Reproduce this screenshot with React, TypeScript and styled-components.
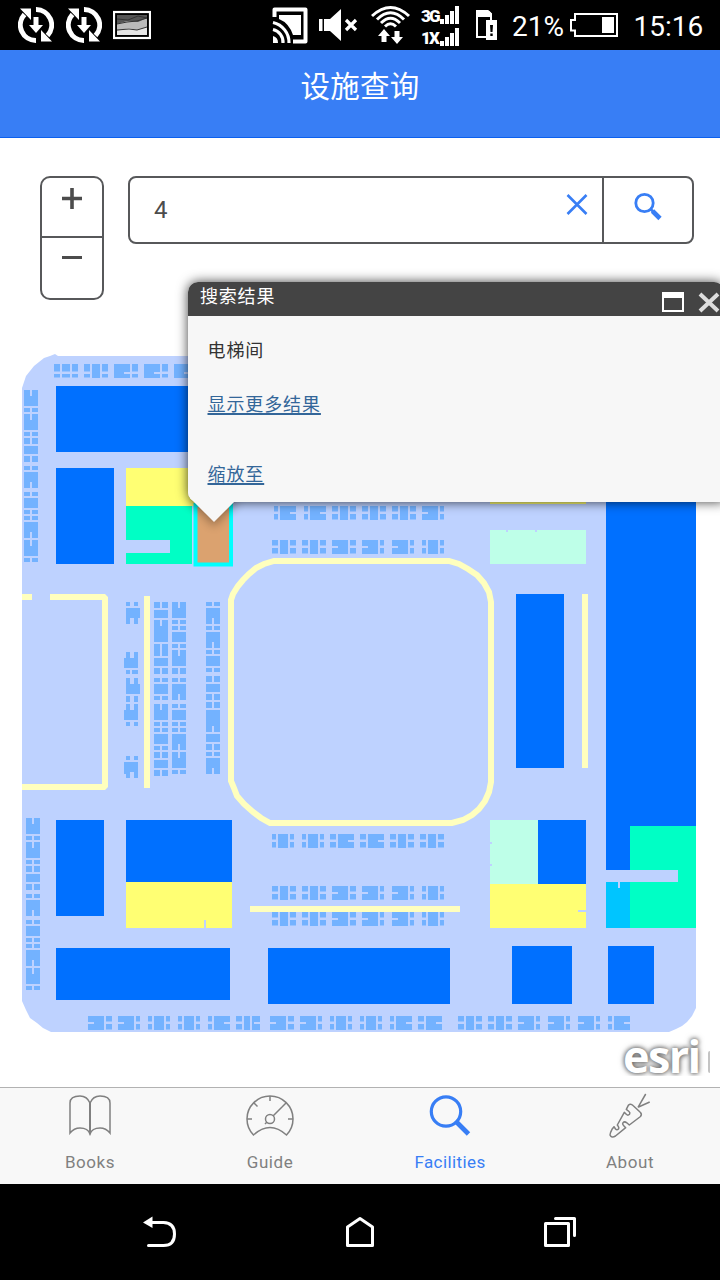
import React from "react";
import styled, { createGlobalStyle } from "styled-components";

const GlobalStyle = createGlobalStyle`
  * { box-sizing: border-box; }
  html, body { margin: 0; padding: 0; background: #fff; overflow: hidden; }
  body { font-family: Roboto, "Noto Sans CJK SC", sans-serif; }
`;

const Screen = styled.div`
  width: 720px;
  height: 1280px;
  display: flex;
  flex-direction: column;
  overflow: hidden;
  background: #fff;
`;

/* ---------- status bar ---------- */

const StatusBar = styled.div`
  height: 50px;
  flex: none;
  display: flex;
  align-items: center;
  background: #000;
  color: #fff;
`;

const StatusIcon = styled.svg<{ $gap?: number }>`
  display: block;
  flex: none;
  height: 50px;
  margin-left: ${(p) => p.$gap ?? 0}px;
`;

const StatusText = styled.span<{ $gap?: number }>`
  font: 400 28px/50px Roboto, sans-serif;
  margin-left: ${(p) => p.$gap ?? 0}px;
  padding-top: 3px;
  white-space: nowrap;
`;

const Radios = styled.div`
  display: flex;
  flex-direction: column;
  gap: 4px;
  margin-left: 10px;
  padding-top: 1px;
`;

const Radio = styled.div`
  display: flex;
  align-items: flex-end;
  width: 39px;
  height: 18px;
  gap: 1px;
  font: 900 17px/16px Roboto, sans-serif;
  letter-spacing: -1.8px;
`;

const RadioName = styled.span`
  width: 18px;
`;

const RadioBar = styled.i<{ $h: number }>`
  width: 4px;
  height: ${(p) => p.$h}px;
  background: #fff;
`;

function SyncIcon({ gap }: { gap: number }) {
  return (
    <StatusIcon $gap={gap} width="36" viewBox="0 0 36 50">
      <g fill="none" stroke="#fff" strokeWidth="5">
        <path d="M18 40.400A15.400 15.400 0 0 1 6.500 14.500" />
        <path d="M18 9.600A15.400 15.400 0 0 1 29.500 35.500" />
      </g>
      <path d="M2 8.500H13V20ZM34 41.500H23V30ZM15.500 17H20.500V25H25L18 33L11 25H15.500Z" fill="#fff" />
    </StatusIcon>
  );
}

function Status() {
  return (
    <StatusBar>
      <SyncIcon gap={18} />
      <SyncIcon gap={12} />
      <StatusIcon $gap={11} width="38" viewBox="0 0 38 50">
        <rect x="1" y="12" width="36" height="26" fill="#000" stroke="#fff" strokeWidth="2.200" />
        <rect x="4" y="15" width="30" height="20" fill="#bbb" />
        <path d="M4 15H34V18L25 22L14 21L4 24Z" fill="#555" />
        <path d="M4 31L16 28L24 30L34 27V35H4Z" fill="#e6e6e6" />
        <path d="M4 19L15 20L25 16L34 18M4 24L14 22L24 21L34 18M4 30L16 29L24 30L34 27" fill="none" stroke="#333" />
      </StatusIcon>
      <StatusIcon $gap={121} width="36" viewBox="0 0 36 50">
        <path d="M2.500 17V9.500H33.500V41.500H21" fill="none" stroke="#fff" strokeWidth="4" strokeLinejoin="round" />
        <path d="M7 15H29V35H21Q17 23 7 19Z" fill="#fff" />
        <path d="M1 22.500A20.500 20.500 0 0 1 17 43M1 29.500A13 13 0 0 1 11 43" fill="none" stroke="#fff" strokeWidth="3.200" />
        <path d="M1 36A7 7 0 0 1 6 43H1Z" fill="#fff" />
      </StatusIcon>
      <StatusIcon $gap={11} width="39" viewBox="0 0 39 50">
        <path d="M0 19H3.500V31H0ZM5 19H11L22 9V41L11 31H5Z" fill="#fff" />
        <path d="M27 20L37 30M37 20L27 30" stroke="#fff" strokeWidth="3.200" />
      </StatusIcon>
      <StatusIcon $gap={13} width="40" viewBox="0 0 40 50">
        <g fill="none" stroke="#fff" strokeWidth="3">
          <path d="M1 16Q19.500-1 38 16" />
          <path d="M6 19.500Q19.500 6 33 19.500" />
          <path d="M10 23Q19.500 13.500 29 23" />
          <path d="M14 26.500Q19.500 21 25 26.500" />
        </g>
        <path d="M13 29L19 36H15.500V42H10.500V36H7ZM26 44L20 37H23.500V31H28.500V37H32Z" fill="#fff" />
      </StatusIcon>
      <Radios>
        {["3G", "1X"].map((name) => (
          <Radio key={name}>
            <RadioName>{name}</RadioName>
            {[5, 9, 13, 18].map((h) => (
              <RadioBar key={h} $h={h} />
            ))}
          </Radio>
        ))}
      </Radios>
      <StatusIcon $gap={15} width="23" viewBox="0 0 23 50">
        <path d="M2 11V37H12M16 20V14L13 11" fill="none" stroke="#fff" strokeWidth="2" />
        <path d="M1 10H13L17 14V17H1ZM11 20H22V40H11Z" fill="#fff" />
        <path d="M15 25H18L17.500 32H15.500ZM15.300 33.500H17.700V36H15.300Z" fill="#000" />
      </StatusIcon>
      <StatusText $gap={14}>21%</StatusText>
      <StatusIcon $gap={6} width="49" viewBox="0 0 49 50">
        <path d="M5 14H47V36H5V30.500H1V20H5Z" fill="none" stroke="#fff" strokeWidth="2" />
        <rect x="32" y="17" width="12" height="16" fill="#fff" />
      </StatusIcon>
      <StatusText $gap={14.5}>15:16</StatusText>
    </StatusBar>
  );
}

const Header = styled.header`
  height: 88px;
  flex: none;
  background: #387ef5;
  border-bottom: 1px solid #0c60ee;
  color: #fff;
  text-align: center;
  font: 400 29.500px/68px "Noto Sans CJK SC", sans-serif;
  letter-spacing: 0.3px;
`;

/* ---------- floor plan ---------- */

const MapStage = styled.main`
  position: relative;
  height: 949px;
  flex: none;
  overflow: hidden;
  background: #fff;
`;

const Plan = styled.svg`
  display: block;
`;

type StripProps = { at: number; runs: string; vertical?: boolean; split?: number };

/* A strip of 14px wide shelving; runs are "start-end" plus p (pair), s (solid), u / n (slot at start / end). */
function Strip({ at, runs, vertical, split = 6 }: StripProps) {
  const parts: number[][] = [];
  runs.split(" ").forEach((run) => {
    const kind = run.slice(-1);
    const [a, b] = run.slice(0, -1).split("-").map(Number);
    const end = split + 2;
    if (kind === "s") {
      parts.push([a, 0, b - a, 14]);
      return;
    }
    if (kind === "p" && !vertical) {
      parts.push([a, 0, b - a, split - 0.5], [a, end, b - a, 13.5 - end]);
      return;
    }
    parts.push([a, 0, b - a, split], [a, end, b - a, 14 - end]);
    if (kind === "u") parts.push([a + 6, split, b - a - 6, 2]);
    if (kind === "n") parts.push([a, split, b - a - 6, 2]);
  });
  const d = parts
    .map(([x, y, w, h]) => (vertical ? `M${at + y} ${x}h${h}v${w}h${-h}z` : `M${x} ${at + y}h${w}v${h}h${-w}z`))
    .join("");
  return <path d={d} fill="#73b2ff" />;
}

const SHELF_ROW =
  "272-278p 280-288s 290-296p 302-308p 310-318s 320-326p 332-348u 350-356p 362-378u 380-384p 392-408u 410-414p 422-426p 428-438s 440-444p";

function FloorPlan() {
  return (
    <Plan width="720" height="949" viewBox="0 138 720 949">
      <path
        d="M22 388L24 382L26 376L30 371L34 366L39 362L44 358L50 356L55 354L58 356H680Q696 366 696 388V1008L692 1016L687 1022L682 1026L676 1029L669 1032H51L43 1028L37 1023L30 1018L26 1010L22 1001Z"
        fill="#bed2ff"
      />
      <Strip at={364} split={8} runs="54-60p 62-70p 72-78p 84-90p 92-100s 102-108p 114-130n 132-138p 144-160n 162-168p 174-190n" />
      <Strip at={506} runs="274-278p 280-296n 304-308p 310-326n 332-338p 340-348s 350-356p 362-368p 370-378s 380-386p 392-398p 400-408s 410-416p 422-438u 440-444p" />
      <Strip at={540} runs={SHELF_ROW} />
      <Strip at={834} runs="272-276p 278-288s 290-294p 302-306p 308-318s 320-324p 330-336p 338-354n 360-366p 368-384n 390-396p 398-406s 408-414p 420-426p 428-436s 438-444p" />
      <Strip at={886} runs={SHELF_ROW} />
      <Strip at={912} runs={SHELF_ROW} />
      <Strip at={1016} runs="88-104u 106-112p 118-134u 136-140p 148-152p 154-164s 166-170p 178-182p 184-194s 196-200p 208-212p 214-230n 236-242p 244-250s 252-260n 270-286u 288-294p 300-316u 318-322p 330-334p 336-346s 348-352p 360-364p 366-376s 378-382p 390-394p 396-412n 418-424p 426-442n 458-464p 466-474s 476-482p 488-494p 496-504s 506-512p 518-534u 536-540p 548-564u 566-570p 578-594u 596-600p 608-612p 614-630n" />
      <Strip vertical at={24} runs="390-406u 408-412p 414-430u 432-436p 438-444p 446-454s 456-462p 466-470p 472-488n 492-496p 498-508s 510-514p 516-520p 522-538n 540-556u 558-562p" />
      <Strip vertical at={26} runs="818-834u 836-840p 842-858u 860-864p 866-872p 874-882s 884-890p 894-898p 900-916n 920-924p 926-936s 938-942p 944-948p 950-966n 968-984u 986-990p" />
      <path
        d="M126 602h4v4h-4zM134 602h4v4h-4zM126 608h14v10h-2v6h-4v-6h-4v6h-4zM126 652h4v6h4v-6h4v16h-14v-10h2zM126 670h4v4h-4zM132 670h6v4h-6zM126 678h4v6h4v-6h4v6h2v10h-14zM126 696h4v6h-4zM134 696h4v6h-4zM126 704h4v6h4v-6h4v16h-14v-10h2zM126 722h4v4h-4zM134 722h4v4h-4zM126 756h4v4h-4zM134 756h4v4h-4zM124 762h14v16h-4v-6h-4v6h-4v-4h-2z"
        fill="#73b2ff"
      />
      <Strip vertical at={154} runs="602-608p 610-618s 620-642u 644-656p 658-666s 668-674p 678-682p 684-694s 696-700p 704-720u 722-726p 728-732p 734-744s 746-750p 752-758p 760-768s 770-776p" />
      <Strip vertical at={172} runs="602-618u 620-624p 626-630p 632-642s 644-648p 650-666u 668-674p 678-682p 684-700n 704-708p 710-720s 722-726p 728-732p 734-750n 752-768u 770-774p" />
      <Strip vertical at={206} runs="602-606p 608-624n 626-630p 632-648n 650-654p 656-666s 668-672p 676-682p 684-692s 694-700p 702-708p 710-732n 734-742s 744-750p 752-756p 758-774n" />
      <path
        d="M56 386H240V452H56ZM56 468H114V564H56ZM56 820H104V916H56ZM126 820H232V882H126ZM56 948H230V1000H56ZM268 948H450V1004H268ZM512 946H572V1004H512ZM608 946H654V1004H608ZM516 594H564V768H516ZM538 820H586V884H538ZM606 480H696V826H630V870H606Z"
        fill="#0070ff"
      />
      <path
        d="M126 468H232V506H126ZM126 882H232V928H206V920H204V928H126ZM490 468H586V504H490ZM490 884H586V910H578V912H586V928H490Z"
        fill="#ffff73"
      />
      <path d="M126 506H192V564H126V553H170V540H126ZM630 826H696V928H630V882H678V870H630Z" fill="#00ffc5" />
      <path d="M490 530H506V532H508V530H535V532H537V530H586V564H490ZM490 820H538V884H490V866H492V864H490V844H492V842H490Z" fill="#beffe8" />
      <path d="M606 882H618V888H620V882H630V928H606Z" fill="#00c5ff" />
      <g fill="none" stroke="#ffffbe" strokeWidth="6">
        <path d="M22 597H32M50 597H105V787H22" strokeLinejoin="bevel" />
        <path d="M147 596V788M585 594V768M250 909H460" />
        <path d="M231 600L233 594L238 586L243 580L249 574L256 568L264 564L274 561H449L459 564L468 569L477 575L484 583L489 592L491 602V782L489 792L485 801L479 809L472 815L463 820L452 823H270L261 818L253 812L244 804L237 796L234 788L231 781Z" />
      </g>
      <rect x="195.500" y="505" width="35.500" height="59.500" fill="#dba26f" stroke="#00ffff" strokeWidth="4" />
    </Plan>
  );
}

/* ---------- map controls ---------- */

const Controls = styled.div`
  position: absolute;
  top: 38px;
  left: 40px;
  right: 26px;
  display: flex;
  align-items: flex-start;
  gap: 24px;
`;

const ZoomBox = styled.div`
  width: 64px;
  height: 124px;
  display: flex;
  flex-direction: column;
  border: 2px solid #57585a;
  border-radius: 10px;
  background: #fff;
`;

const ZoomButton = styled.button`
  flex: 1;
  padding: 0;
  border: 0;
  background: none;
  display: flex;
  justify-content: center;
  & + & {
    flex: 0 0 62px;
    border-top: 2px solid #57585a;
  }
`;

const SearchBox = styled.div`
  flex: 1;
  height: 68px;
  display: flex;
  border: 2px solid #57585a;
  border-radius: 8px;
  background: #fff;
`;

const Query = styled.div`
  flex: 1;
  padding-left: 24px;
  color: #4c4c4c;
  font: 400 24px/64px Roboto, sans-serif;
`;

const ClearIcon = styled.svg`
  margin: 15px 14px 0 0;
`;

const SearchButton = styled.button`
  width: 90px;
  padding: 0;
  border: 0;
  border-left: 2px solid #57585a;
  background: none;
  display: flex;
  justify-content: center;
  & > svg { margin-top: 14px; }
`;

/* ---------- popup ---------- */

const Popup = styled.section`
  position: absolute;
  left: 188px;
  top: 144px;
  width: 536px;
  height: 220px;
  border-radius: 10px 10px 0 10px;
  background: #f7f7f7;
  box-shadow: 0 0 12px rgba(0, 0, 0, 0.75);
`;

const Pointer = styled.div`
  position: absolute;
  left: 9px;
  bottom: -13px;
  width: 34px;
  height: 34px;
  transform: rotate(45deg);
  background: #f7f7f7;
  box-shadow: 3px 3px 10px rgba(0, 0, 0, 0.3);
`;

const PopupFace = styled.div`
  position: relative;
  height: 220px;
  border-radius: 10px 10px 0 10px;
  overflow: hidden;
  background: #f7f7f7;
`;

const PopupTitle = styled.div`
  height: 34px;
  padding-left: 12px;
  display: flex;
  background: #444;
  color: #fff;
  font: 400 18px/27px "Noto Sans CJK SC", sans-serif;
  letter-spacing: 0.8px;
  & > span { flex: 1; }
`;

const PopupBody = styled.div`
  padding: 19px 19.5px;
  display: flex;
  flex-direction: column;
  align-items: flex-start;
  color: #333;
  font: 400 18px/28px "Noto Sans CJK SC", sans-serif;
  letter-spacing: 0.9px;
`;

const PopupLink = styled.a<{ $gap: number }>`
  margin-top: ${(p) => p.$gap}px;
  color: #336699;
  text-decoration: underline;
  text-decoration-thickness: 2px;
  text-underline-offset: 2px;
`;

const Credit = styled.div`
  position: absolute;
  right: 10px;
  bottom: 11px;
  width: 96px;
  height: 52px;
  display: flex;
  align-items: flex-end;
  justify-content: space-between;
  padding-left: 9px;
  color: #fff;
  font: 700 45px/40px "Open Sans", sans-serif;
  letter-spacing: -1.6px;
  text-shadow: 0 0 4px #666, 0 0 6px #777;
  clip-path: inset(0);
`;

const CreditEdge = styled.i`
  flex: none;
  width: 2px;
  height: 22px;
  margin-bottom: 3px;
  border-radius: 2px 0 0 2px;
  background: #c4c4c4;
`;

/* ---------- tabs and system keys ---------- */

const TabBar = styled.nav`
  height: 97px;
  flex: none;
  display: grid;
  grid-template-columns: repeat(4, 1fr);
  border-top: 1px solid #b2b2b2;
  background: #f8f8f8;
`;

const Tab = styled.div<{ $active?: boolean }>`
  display: flex;
  flex-direction: column;
  align-items: center;
  color: ${(p) => (p.$active ? "#387ef5" : "#808080")};
  font: 400 17px/24px Roboto, sans-serif;
  letter-spacing: ${(p) => (p.$active ? 0.4 : 0.55)}px;
  & > svg { display: block; margin: 4px 0 10px; }
`;

const SystemKeys = styled.footer`
  flex: 1;
  display: flex;
  justify-content: center;
  gap: 164px;
  padding-top: 30px;
  background: #000;
`;

const KeyIcon = styled.svg`
  width: 36px;
  height: 36px;
  fill: none;
  stroke: #fff;
  stroke-width: 3;
  stroke-linejoin: round;
  stroke-linecap: round;
`;

function TabIcon({ children }: { children: React.ReactNode }) {
  return (
    <svg width="52" height="48" viewBox="0 0 52 48" fill="none" stroke="currentColor" strokeWidth="1.500">
      {children}
    </svg>
  );
}

export default function App() {
  return (
    <>
      <GlobalStyle />
      <Screen>
        <Status />
        <Header>设施查询</Header>
        <MapStage>
          <FloorPlan />
          <Controls>
            <ZoomBox>
              <ZoomButton aria-label="+">
                <svg width="22" height="40" viewBox="0 0 22 40" stroke="#4c4c4c" strokeWidth="3.600">
                  <path d="M1 20.500H21M11 10V31" />
                </svg>
              </ZoomButton>
              <ZoomButton aria-label="−">
                <svg width="22" height="40" viewBox="0 0 22 40" stroke="#4c4c4c" strokeWidth="3">
                  <path d="M1 19.500H21" />
                </svg>
              </ZoomButton>
            </ZoomBox>
            <SearchBox>
              <Query>4</Query>
              <ClearIcon width="22" height="22" viewBox="0 0 22 22" stroke="#387ef5" strokeWidth="2.600">
                <path d="M1.500 2L20.500 21M20.500 2L1.500 21" />
              </ClearIcon>
              <SearchButton aria-label="搜索">
                <svg width="28" height="29" viewBox="0 0 28 29" fill="none" stroke="#387ef5">
                  <circle cx="10.500" cy="11" r="8.700" strokeWidth="2.800" />
                  <path d="M16 16.500L19 19.500" strokeWidth="2.600" />
                  <path d="M18.500 19L26 26.500" strokeWidth="4.600" />
                </svg>
              </SearchButton>
            </SearchBox>
          </Controls>
          <Popup>
            <Pointer />
            <PopupFace>
              <PopupTitle>
                <span>搜索结果</span>
                <svg width="64" height="34" viewBox="0 0 64 34" fill="none" stroke="#fff">
                  <path d="M3 11V29H23V11" strokeWidth="2" />
                  <path d="M2 13H24" strokeWidth="6" />
                  <path d="M40 12L58 29M58 12L40 29" strokeWidth="4" stroke="#ddd" />
                </svg>
              </PopupTitle>
              <PopupBody>
                <span>电梯间</span>
                <PopupLink $gap={26}>显示更多结果</PopupLink>
                <PopupLink $gap={42}>缩放至</PopupLink>
              </PopupBody>
            </PopupFace>
          </Popup>
          <Credit>
            esri
            <CreditEdge />
          </Credit>
        </MapStage>
        <TabBar>
          <Tab>
            <TabIcon>
              <path d="M26 43V11Q23 4 16 4Q6 4 6 11V41Q10 36 16 36Q24 36 26 42Q28 36 36 36Q42 36 46 41V11Q46 4 36 4Q29 4 26 11" />
              <path d="M26 11V42" strokeWidth="2" />
            </TabIcon>
            Books
          </Tab>
          <Tab>
            <TabIcon>
              <path d="M9.500 43A23 23 0 1 1 42.500 43Q26 28 9.500 43Z" />
              <circle cx="26" cy="27" r="4.500" />
              <path d="M26 4V9M3 27H8M49 27H44M10 11L13.500 14.500M42 11L38 15M29 24L40 13M23 30L21 32" />
            </TabIcon>
            Guide
          </Tab>
          <Tab $active>
            <TabIcon>
              <circle cx="22" cy="19.500" r="14.700" strokeWidth="3.200" />
              <path d="M31.500 29L44.500 42" strokeWidth="4.800" />
            </TabIcon>
            Facilities
          </Tab>
          <Tab>
            <TabIcon>
              <path
                d="M34 15.300L41.700 2M34 15.300L45.700 10M24.300 13.300Q26.500 11 29 13.500L36 20Q38.500 22 36.500 24.500L25.300 33L22.800 30.800Q20.500 29 19 30.800Q18 32 19.500 33.500L21.700 35.700L11.500 44Q7.500 46.500 6 43Q6 41 8 37.300L10 34.700L11.500 37Q13 38.500 14.500 37Q15.500 35.500 13.300 33L20.300 20.300L22.500 22.500Q24 23.800 25.500 22.300Q26.500 20.800 25 19.500L22.300 17.300Z"
                strokeLinejoin="round"
              />
            </TabIcon>
            About
          </Tab>
        </TabBar>
        <SystemKeys>
          <KeyIcon viewBox="0 0 36 36">
            <path d="M7 8.500H21.500Q32.500 9 32.500 20Q32.500 31.500 21.500 31.500H6.500" />
            <path d="M1 8.500L10.500 2.500V14Z" fill="#fff" stroke="none" />
          </KeyIcon>
          <KeyIcon viewBox="0 0 36 36">
            <path d="M5.500 31.500V13L18 4.500L30.500 13V31.500Z" />
          </KeyIcon>
          <KeyIcon viewBox="0 0 36 36">
            <path d="M3.500 9.500H26.500V31.500H3.500ZM13.500 4.500H32.500V21.500" />
          </KeyIcon>
        </SystemKeys>
      </Screen>
    </>
  );
}
